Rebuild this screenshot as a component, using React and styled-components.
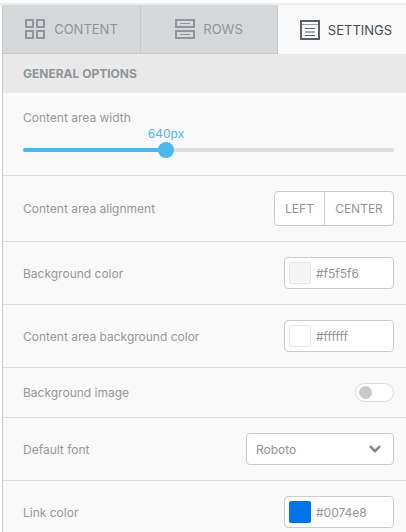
import React from 'react';
import styled, { createGlobalStyle } from 'styled-components';

const Global = createGlobalStyle`
  html, body { margin: 0; padding: 0; background: #fff; }
  body { font-family: Inter, "Liberation Sans", sans-serif; overflow: hidden; }
  * { box-sizing: border-box; }
`;
const Page = styled.div`
  width: 406px; height: 532px; padding: 3px 0 0 2px; overflow: hidden; background: #fff;
`;
const TopStrip = styled.div`
  height: 2px; margin-left: -2px; width: 406px; background: #ededed;
`;
const Panel = styled.div`
  width: 404px; height: 527px; background: #f9f9f9; border-left: 1px solid #c9c9c9; overflow: hidden;
`;
const Tabs = styled.div`
  display: flex; height: 49px;
`;
const Tab = styled.div`
  flex: none; width: ${p => p.$w}px; display: flex; align-items: center; justify-content: center; gap: ${p => p.$gap}px;
  font-size: 13px;
  background: ${p => (p.$active ? '#f9f9f9' : '#d5d8db')};
  color: ${p => (p.$active ? '#444d55' : '#8f9599')};
  border-right: ${p => (p.$active ? '0' : '1px solid #c6c9cc')};
  border-bottom: ${p => (p.$active ? '0' : '1px solid #c6c9cc')};
`;
const SectionHead = styled.div`
  height: 39px; background: #e9e9e9; display: flex; align-items: center; padding-left: 20px;
  font-size: 12px; font-weight: 700; color: #8f9599;
`;
const Row = styled.div`
  height: ${p => p.$h}px; display: flex; align-items: center; justify-content: space-between;
  padding: 0 12px 0 20px; border-bottom: 1px solid #dcdcdc;
`;
const Label = styled.div`
  font-size: 12px; color: #93989c;
`;
const SliderRow = styled.div`
  height: 83px; padding: 17px 12px 0 20px; border-bottom: 1px solid #dcdcdc;
`;
const Value = styled.div`
  text-align: center; width: 286px; font-size: 12px; color: #4cb8ee; height: 15px; line-height: 15px; margin-top: 1px;
`;
const Track = styled.div`
  position: relative; height: 4px; border-radius: 2px; background: #dcdcdc; margin-top: 7px;
`;
const Fill = styled.div`
  height: 4px; border-radius: 2px; background: #4cb8ee;
`;
const Thumb = styled.div`
  position: absolute; top: -6px; width: 16px; height: 16px; border-radius: 50%; background: #4cb8ee;
`;
const Segments = styled.div`
  display: flex; height: 35px; background: #fff; border: 1px solid #c9cbcd; border-radius: 4px;
`;
const Segment = styled.div`
  width: ${p => p.$w}px; display: flex; align-items: center; justify-content: center; font-size: 12px; color: #8f9599;
  & + & { border-left: 1px solid #c9cbcd; }
`;
const Picker = styled.div`
  width: 110px; height: 32px; display: flex; align-items: center; gap: 5px; padding: 0 4px;
  background: #fff; border: 1px solid #c9cbcd; border-radius: 4px; font-size: 12px; color: #8f9599;
`;
const Swatch = styled.div`
  width: 22px; height: 22px; border-radius: 2px; background: ${p => p.$c}; border: 1px solid ${p => p.$b};
`;
const Toggle = styled.div`
  width: 39px; height: 19px; border-radius: 10px; background: #fff; border: 1px solid #dcdcdc; padding: 2px 3px;
`;
const Knob = styled.div`
  width: 13px; height: 13px; border-radius: 50%; background: #c9c9c9;
`;
const Select = styled.div`
  width: 148px; height: 32px; display: flex; align-items: center; justify-content: space-between; padding: 0 12px 0 9px;
  background: #fff; border: 1px solid #c9cbcd; border-radius: 4px; font-size: 12px; color: #8f9599;
`;
const Icon = styled.svg`
  display: block; flex: none;
`;

export default function App() {
  return (
    <Page>
      <Global />
      <TopStrip />
      <Panel>
        <Tabs>
          <Tab $w={138} $gap={9}>
            <Icon width="20" height="20" viewBox="0 0 20 20" fill="none" stroke="#8f9599" strokeWidth="2">
              <rect x="1" y="1" width="7" height="7" /><rect x="12" y="1" width="7" height="7" />
              <rect x="1" y="12" width="7" height="7" /><rect x="12" y="12" width="7" height="7" />
            </Icon>
            CONTENT
          </Tab>
          <Tab $w={137} $gap={8}>
            <Icon width="20" height="20" viewBox="0 0 20 20" fill="none" stroke="#8f9599" strokeWidth="2">
              <rect x="1" y="1" width="18" height="7" /><rect x="1" y="12" width="18" height="7" />
              <path d="M5 4.500h10M5 15.500h10" strokeWidth="1" />
            </Icon>
            ROWS
          </Tab>
          <Tab $w={136} $gap={8} $active>
            <Icon width="20" height="20" viewBox="0 0 20 20" fill="none" stroke="#566068" strokeWidth="2">
              <rect x="1" y="1" width="18" height="18" />
              <path d="M2 4.500h16" strokeWidth="1" opacity="0.6" />
              <path d="M5 8.500h10M5 12h10M5 15.500h10" strokeWidth="1" />
            </Icon>
            SETTINGS
          </Tab>
        </Tabs>
        <SectionHead>GENERAL OPTIONS</SectionHead>
        <SliderRow>
          <Label>Content area width</Label>
          <Value>640px</Value>
          <Track>
            <Fill style={{ width: '39%' }} />
            <Thumb style={{ left: '135px' }} />
          </Track>
        </SliderRow>
        <Row $h={66}>
          <Label>Content area alignment</Label>
          <Segments><Segment $w={49}>LEFT</Segment><Segment $w={69}>CENTER</Segment></Segments>
        </Row>
        <Row $h={63}>
          <Label>Background color</Label>
          <Picker><Swatch $c="#f5f5f6" $b="#e4e4e4" />#f5f5f6</Picker>
        </Row>
        <Row $h={63}>
          <Label>Content area background color</Label>
          <Picker><Swatch $c="#ffffff" $b="#e4e4e4" />#ffffff</Picker>
        </Row>
        <Row $h={50}>
          <Label>Background image</Label>
          <Toggle><Knob /></Toggle>
        </Row>
        <Row $h={63}>
          <Label>Default font</Label>
          <Select>Roboto
            <Icon width="12" height="8" viewBox="0 0 12 8" fill="none" stroke="#7f868a" strokeWidth="2.400"><path d="M1 1.200 6 6.200l5-5" /></Icon>
          </Select>
        </Row>
        <Row $h={63}>
          <Label>Link color</Label>
          <Picker><Swatch $c="#0074e8" $b="#0074e8" />#0074e8</Picker>
        </Row>
      </Panel>
    </Page>
  );
}
